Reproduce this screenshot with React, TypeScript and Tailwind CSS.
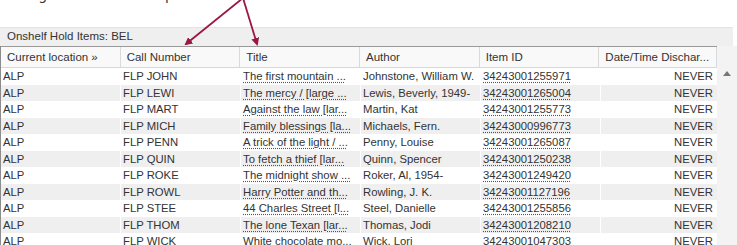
import React from "react";

const rows: [string, string, string, string][] = [
  ["FLP JOHN", "The first mountain ...", "Johnstone, William W.", "34243001255971"],
  ["FLP LEWI", "The mercy / [large ...", "Lewis, Beverly, 1949-", "34243001265004"],
  ["FLP MART", "Against the law [lar...", "Martin, Kat", "34243001255773"],
  ["FLP MICH", "Family blessings [la...", "Michaels, Fern.", "34243000996773"],
  ["FLP PENN", "A trick of the light / ...", "Penny, Louise", "34243001265087"],
  ["FLP QUIN", "To fetch a thief [lar...", "Quinn, Spencer", "34243001250238"],
  ["FLP ROKE", "The midnight show ...", "Roker, Al, 1954-", "34243001249420"],
  ["FLP ROWL", "Harry Potter and th...", "Rowling, J. K.", "34243001127196"],
  ["FLP STEE", "44 Charles Street [l...", "Steel, Danielle", "34243001255856"],
  ["FLP THOM", "The lone Texan [lar...", "Thomas, Jodi", "34243001208210"],
  ["FLP WICK", "White chocolate mo...", "Wick, Lori", "34243001047303"],
];

const headers = ["Current location »", "Call Number", "Title", "Author", "Item ID", "Date/Time Dischar..."];

export default function App() {
  return (
    <div className="relative w-[737px] h-[245px] overflow-hidden bg-white text-[#333] font-['Liberation_Sans',Arial,sans-serif]">
      {/* caption, cut off at the top */}
      <div className="h-[27px] overflow-hidden">
        <div className="-mt-[13px] pl-[8px] text-[14px] leading-[16px] text-[#3a3a3a] font-['DejaVu_Sans',sans-serif] whitespace-nowrap">
          Using these two sort options
        </div>
      </div>

      {/* panel title */}
      <div className="h-[19px] mr-[4px] bg-[#efefef] border-t border-[#e4e4e4] pl-[7px] text-[11.5px] leading-[17px]">
        Onshelf Hold Items: BEL
      </div>

      <div className="flex">
        <div className="w-[717px] border-l border-[#8c8c8c]">
          {/* header */}
          <div className="flex h-[22px] bg-[#f9f9f9] border-t border-b border-t-[#9a9a9a] border-b-[#d8d8d8] text-[11.5px] leading-[20px]">
            {headers.map((h, i) => (
              <div
                key={h}
                className={`px-[6px] whitespace-nowrap overflow-hidden ${i === 5 ? "w-[118px]" : "w-[120px]"} border-r border-[#dadada]`}
              >
                {h}
              </div>
            ))}
          </div>

          {/* rows */}
          {rows.map((r, i) => (
            <div
              key={r[0]}
              className={`flex h-[16.5px] text-[11.3px] leading-[16px] whitespace-nowrap ${i % 2 === 1 ? "bg-[#efefef]" : "bg-white"}`}
            >
              <div className="w-[120px] pl-[2px] border-r border-white">ALP</div>
              <div className="w-[120px] pl-[2px] border-r border-white">{r[0]}</div>
              <div className="w-[120px] pl-[2px] border-r border-white overflow-hidden">
                <span className="underline decoration-dotted decoration-[#555] underline-offset-[2px]">{r[1]}</span>
              </div>
              <div className="w-[120px] pl-[2px] border-r border-white overflow-hidden">{r[2]}</div>
              <div className="w-[120px] pl-[2px] border-r border-white">
                <span className="underline decoration-dotted decoration-[#555] underline-offset-[2px]">{r[3]}</span>
              </div>
              <div className="w-[116px] pr-[4px] text-right">NEVER</div>
            </div>
          ))}
        </div>

        {/* scrollbar */}
        <div className="w-[20px] bg-[#f3f3f3] flex flex-col items-center pt-[25px]">
          <svg width="8" height="5" viewBox="0 0 8 5">
            <path d="M0 5 L4 0 L8 5 Z" fill="#777" />
          </svg>
        </div>
      </div>

      {/* annotation arrows */}
      <svg className="absolute left-0 top-0 pointer-events-none" width="737" height="60">
        <defs>
          <marker id="ah" markerWidth="8" markerHeight="8" refX="6" refY="4" orient="auto" markerUnits="userSpaceOnUse">
            <path d="M0 0 L8 4 L0 8 Z" fill="#9a1840" />
          </marker>
        </defs>
        <line x1="243" y1="-2" x2="186" y2="44" stroke="#9a1840" strokeWidth="1.8" markerEnd="url(#ah)" />
        <line x1="243" y1="-2" x2="257" y2="44" stroke="#9a1840" strokeWidth="1.8" markerEnd="url(#ah)" />
      </svg>
    </div>
  );
}
